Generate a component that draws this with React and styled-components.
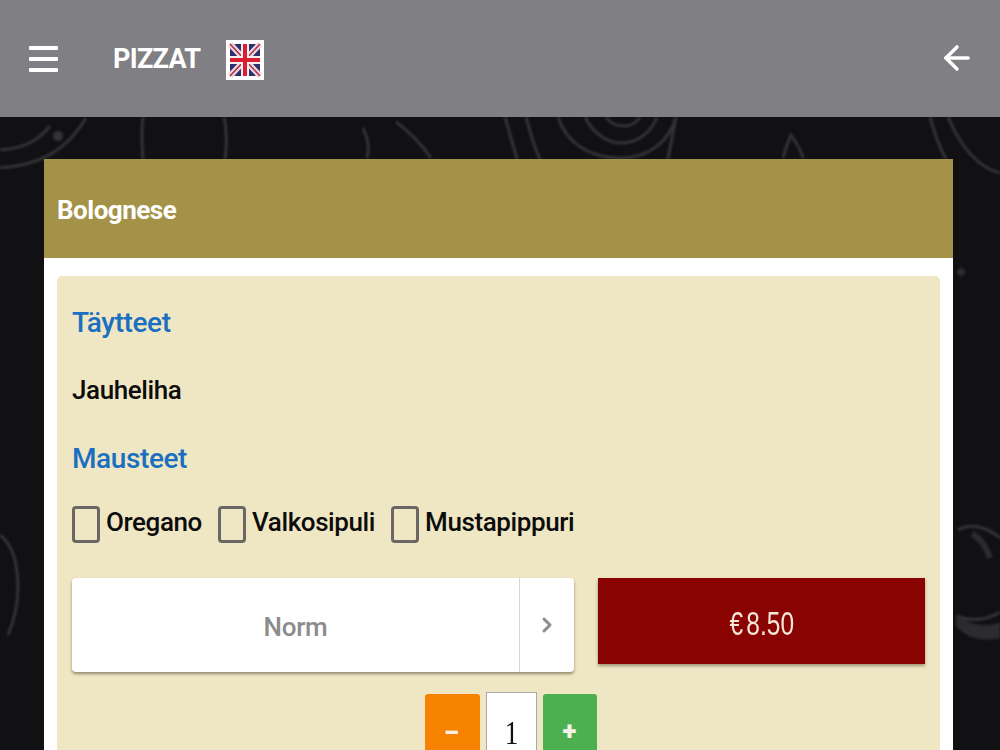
import React from "react"
import styled, { createGlobalStyle } from "styled-components"
import { ArrowLeft, ChevronRight } from "lucide-react"

const GlobalStyle = createGlobalStyle`
  html, body {
    margin: 0;
    height: 750px;
    overflow: hidden;
    background: #111114;
    font-family: Roboto, "Noto Sans", sans-serif;
  }
`

const Page = styled.div`
  position: relative;
  width: 1000px;
  height: 750px;
  overflow: hidden;
`

const Swirls = styled.svg`
  position: absolute;
  inset: 0;
  fill: none;
  stroke: #343436;
  stroke-width: 3;
  filter: blur(1px);
`

const Content = styled.div`
  position: relative;
`

const Toolbar = styled.header`
  display: flex;
  align-items: center;
  height: 117px;
  padding: 0 24px 0 29px;
  box-sizing: border-box;
  background: #807f83;
  color: #fff;
`

const Burger = styled.div`
  display: flex;
  flex-direction: column;
  gap: 7px;
  width: 29px;
  margin-right: 55px;

  span {
    height: 4px;
    background: #fff;
    border-radius: 1px;
  }
`

const Title = styled.h1`
  margin: 2px 26px 0 0;
  font-size: 27px;
  line-height: 1;
  font-weight: 700;
  letter-spacing: -0.7px;
`

const Flag = styled.svg`
  width: 38px;
  height: 40px;
  display: block;
  margin-top: 2px;
`

const Back = styled.div`
  display: flex;
  margin-left: auto;
  margin-top: -2px;
`

const Card = styled.section`
  margin: 42px 47px 0 44px;
  background: #fff;
  padding-bottom: 20px;
`

const CardHead = styled.div`
  display: flex;
  align-items: center;
  height: 99px;
  padding: 3px 13px 0;
  box-sizing: border-box;
  background: #a39248;
  color: #fff;
  font-size: 26px;
  font-weight: 700;
  letter-spacing: -0.5px;
`

const Panel = styled.div`
  margin: 18px 13px 0;
  padding: 28px 15px 0;
  height: 520px;
  box-sizing: border-box;
  background: #efe6c3;
  border-radius: 5px;
`

const Label = styled.h2`
  margin: 0;
  height: ${(p) => p.$h}px;
  font-size: 28px;
  line-height: 38px;
  font-weight: 500;
  letter-spacing: -0.4px;
  color: #1a6fc0;
`

const Filling = styled.p`
  margin: 0;
  height: 68px;
  font-size: 26px;
  line-height: 36px;
  font-weight: 500;
  letter-spacing: -0.4px;
  color: #0c0c0c;
`

const Options = styled.div`
  display: flex;
  gap: 16px;
  height: 75px;
`

const Option = styled.label`
  display: flex;
  align-items: center;
  gap: 6px;
  height: 38px;
  font-size: 26px;
  font-weight: 500;
  letter-spacing: -0.4px;
  color: #0c0c0c;
`

const Box = styled.span`
  width: 22px;
  height: 31px;
  margin-top: 4px;
  border: 3px solid #6b6762;
  border-radius: 4px;
`

const OrderRow = styled.div`
  display: flex;
  align-items: flex-start;
  gap: 24px;
`

const Select = styled.div`
  display: flex;
  width: 502px;
  height: 94px;
  background: #fff;
  border-radius: 4px;
  box-shadow: 0 2px 3px rgba(60, 50, 30, 0.5);
`

const SelectValue = styled.div`
  flex: 1;
  display: flex;
  align-items: center;
  justify-content: center;
  padding-top: 3px;
  font-size: 26px;
  font-weight: 500;
  letter-spacing: -0.3px;
  color: #8c8c8c;
`

const SelectArrow = styled.div`
  display: flex;
  align-items: center;
  justify-content: center;
  width: 54px;
  border-left: 1px solid #d8d8d8;
  color: #8c8c8c;
`

const Price = styled.button`
  width: 327px;
  height: 86px;
  padding: 4px 0 0;
  border: 0;
  background: #8a0303;
  color: #f5e6d8;
  font-family: "Liberation Sans", sans-serif;
  font-size: 34px;
  box-shadow: 0 2px 3px rgba(60, 50, 30, 0.45);

  span {
    display: inline-block;
    transform: scaleX(0.72);
    word-spacing: -5px;
  }
`

const Quantity = styled.div`
  display: flex;
  justify-content: center;
  align-items: flex-start;
  gap: 6px;
  margin: 20px 0 0 24px;
`

const Step = styled.button`
  display: flex;
  justify-content: center;
  width: ${(p) => p.$w}px;
  height: 80px;
  margin-top: 2px;
  padding: 22px 0 0;
  border: 0;
  border-radius: 3px;
  background: ${(p) => p.$bg};
  color: #f6f1e4;
  font-family: Roboto, sans-serif;
  font-size: 26px;
  font-weight: 900;
  line-height: 30px;

  span {
    display: block;
    transform: scaleX(${(p) => p.$stretch});
  }
`

const Count = styled.div`
  width: 49px;
  height: 80px;
  display: flex;
  align-items: center;
  justify-content: center;
  background: #fff;
  border: 1px solid #a9a9a9;
  font-family: "Liberation Serif", serif;
  font-size: 34px;
  color: #111;

  span {
    display: inline-block;
    transform: scaleX(0.8);
  }
`

export default function App() {
  return (
    <Page>
      <GlobalStyle />
      <Swirls viewBox="0 0 1000 750" width="1000" height="750">
        <path d="M-10 168c45 0 75-15 96-50" />
        <path d="M-8 150c30 0 45-8 58-24" />
        <path d="M143 117c-2 15-1 28 0 42M224 117c3 15 3 28 1 42" />
        <path d="M363 128c5 10 7 20 4 30M396 122c14 10 26 23 35 36" />
        <path d="M505 117l12 42M526 117c4 15 8 30 14 42M585 117c8 16 22 26 36 26 16 0 30-10 36-26M558 117c8 26 32 41 62 41s50-18 56-41M606 117c4 6 10 9 18 9s12-3 16-9M676 117l-8 42" />
        <path d="M783 158c3-12 6-18 8-23 5 7 10 15 12 23" />
        <path d="M930 117c5 18 10 32 16 42M948 117c12 28 28 50 52 56" />
        <path d="M0 535c20 15 24 62 8 100" />
        <path d="M958 530c14-8 30-2 42 8M1000 612c-12 8-28 10-44 4" />
        <path d="M972 534c8 4 14 12 18 24" strokeWidth="6" stroke="#2c2c2e" />
        <path d="M956 614c16 12 30 14 44 8v16c-18 4-34 0-44-12z" fill="#2c2c2e" stroke="none" />
        <circle cx="58" cy="136" r="5" fill="#343436" stroke="none" />
        <circle cx="961" cy="272" r="4" fill="#2c2c2e" stroke="none" />
      </Swirls>
      <Content>
        <Toolbar>
          <Burger>
            <span />
            <span />
            <span />
          </Burger>
          <Title>PIZZAT</Title>
          <Flag viewBox="0 0 38 40">
            <rect width="38" height="40" fill="#fff" />
            <rect x="4" y="4" width="30" height="32" fill="#2b2f6b" />
            <path d="M4 4l30 32M34 4L4 36" stroke="#e3d8e0" strokeWidth="6" />
            <path d="M4 4l30 32M34 4L4 36" stroke="#c4243a" strokeWidth="1.5" />
            <path d="M19 4v32M4 20h30" stroke="#f4eef0" strokeWidth="8" />
            <path d="M19 4v32M4 20h30" stroke="#d81e30" strokeWidth="4" />
          </Flag>
          <Back>
            <ArrowLeft size={38} strokeWidth={2.2} />
          </Back>
        </Toolbar>
        <Card>
          <CardHead>Bolognese</CardHead>
          <Panel>
            <Label $h={68}>Täytteet</Label>
            <Filling>Jauheliha</Filling>
            <Label $h={63}>Mausteet</Label>
            <Options>
              <Option><Box />Oregano</Option>
              <Option><Box />Valkosipuli</Option>
              <Option><Box />Mustapippuri</Option>
            </Options>
            <OrderRow>
              <Select>
                <SelectValue>Norm</SelectValue>
                <SelectArrow>
                  <ChevronRight size={24} strokeWidth={3} />
                </SelectArrow>
              </Select>
              <Price><span>€ 8.50</span></Price>
            </OrderRow>
            <Quantity>
              <Step $w={55} $bg="#f78200" $stretch={1.6}><span>-</span></Step>
              <Count><span>1</span></Count>
              <Step $w={54} $bg="#4caf50" $stretch={1}><span>+</span></Step>
            </Quantity>
          </Panel>
        </Card>
      </Content>
    </Page>
  )
}
